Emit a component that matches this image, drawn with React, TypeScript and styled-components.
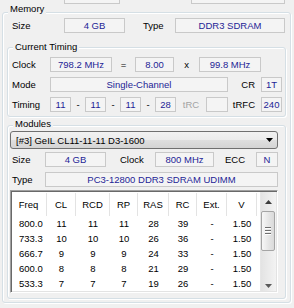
import React from 'react'
import styled, { createGlobalStyle } from 'styled-components'

const GlobalStyle = createGlobalStyle`
  html, body {
    margin: 0;
    padding: 0;
    background: #f0f0f0;
  }
  body {
    font-family: 'Liberation Sans', Arial, sans-serif;
    font-size: 9.5px;
    color: #000;
  }
`

const Page = styled.div`
  width: 294px;
  height: 308px;
  overflow: hidden;
  background: #f0f0f0;
`

// fields of the panel above, scrolled almost out of view
const ClipRow = styled.div`
  display: flex;
  height: 4px;
`

const ClipBox = styled.div<{ $left: number; $w: number }>`
  flex: none;
  margin-left: ${({ $left }) => $left}px;
  width: ${({ $w }) => $w}px;
  box-sizing: border-box;
  border: 1px solid #c9c9c9;
  border-top: none;
  background: #f4f4f4;
`

const Group = styled.div<{ $mt: number; $pad: string }>`
  position: relative;
  box-sizing: border-box;
  margin-top: ${({ $mt }) => $mt}px;
  padding: ${({ $pad }) => $pad};
  border: 1px solid #d5dfe5;
  border-radius: 3px;
  box-shadow: inset 1px 1px 0 #fff, 1px 1px 0 #fff;
`

const OuterGroup = styled(Group)`
  margin-left: 2px;
  margin-right: 3px;
`

const Caption = styled.span<{ $top: number }>`
  position: absolute;
  top: ${({ $top }) => $top}px;
  left: 5px;
  padding: 0 2px;
  line-height: 11px;
  background: #f0f0f0;
  white-space: nowrap;
`

const Stack = styled.div`
  display: flex;
  flex-direction: column;
  gap: 5px;
`

const Row = styled.div<{ $mt?: number; $indent?: number }>`
  display: flex;
  align-items: center;
  height: 15px;
  margin-top: ${({ $mt = 0 }) => $mt}px;
  padding-left: ${({ $indent = 0 }) => $indent}px;
`

const Label = styled.div<{ $w: number; $align?: 'left' | 'center' | 'right'; $pad?: number; $dim?: boolean }>`
  flex: none;
  width: ${({ $w }) => $w}px;
  box-sizing: border-box;
  text-align: ${({ $align = 'left' }) => $align};
  padding: ${({ $align, $pad = 0 }) => ($align === 'right' ? `0 ${$pad}px 0 0` : `0 0 0 ${$pad}px`)};
  color: ${({ $dim }) => ($dim ? '#a3a3a3' : '#000')};
  white-space: nowrap;
`

const Value = styled.div<{ $w?: number }>`
  flex: ${({ $w }) => ($w ? 'none' : '1')};
  width: ${({ $w }) => ($w ? `${$w}px` : 'auto')};
  height: 15px;
  box-sizing: border-box;
  border: 1px solid #c9c9c9;
  background: #f4f4f4;
  color: #1e1e96;
  display: flex;
  align-items: center;
  justify-content: center;
  white-space: nowrap;
`

const Select = styled.div`
  display: flex;
  align-items: center;
  justify-content: space-between;
  height: 18px;
  box-sizing: border-box;
  padding: 0 4px 0 5px;
  border: 1px solid #707070;
  border-radius: 3px;
  background: linear-gradient(#f2f2f2 0%, #ebebeb 50%, #dfdfdf 51%, #d4d4d4 100%);
  white-space: nowrap;
`

const ListView = styled.div`
  display: flex;
  height: 103px;
  margin-top: 3px;
  box-sizing: border-box;
  border: 1px solid;
  border-color: #a0a0a0 #fff #fff #a0a0a0;
  box-shadow: inset 1px 1px 0 #696969, inset -1px -1px 0 #e3e3e3;
  background: #fff;
`

const Table = styled.div`
  flex: 1;
  display: grid;
  grid-template-columns: 36px 29px 34px 28px 31px 28px 30px 30px;
  grid-template-rows: 25px;
  grid-auto-rows: 15px;
  align-content: start;
`

const HeadCell = styled.div`
  margin-top: 2px;
  box-sizing: border-box;
  border-right: 1px solid #e3e3e3;
  display: flex;
  align-items: center;
  justify-content: center;
`

const Cell = styled.div<{ $left?: boolean }>`
  line-height: 15px;
  text-align: ${({ $left }) => ($left ? 'left' : 'center')};
  padding-left: ${({ $left }) => ($left ? 8 : 0)}px;
  white-space: nowrap;
`

const ScrollBar = styled.div`
  flex: none;
  width: 15px;
  margin: 1px 1px 1px 0;
  display: flex;
  flex-direction: column;
  background: linear-gradient(to right, #e3e3e3, #f3f3f3);
  border-left: 1px solid #e6e6e6;
`

const ScrollBtn = styled.div<{ $h: number; $shift: number }>`
  flex: none;
  height: ${({ $h }) => $h}px;
  box-sizing: border-box;
  padding-top: ${({ $shift }) => $shift}px;
  display: flex;
  align-items: center;
  justify-content: center;
`

const Track = styled.div`
  flex: 1;
  padding: 2px 1px 0 0;
`

const Thumb = styled.div`
  height: 40px;
  box-sizing: border-box;
  border: 1px solid #a5a5a5;
  border-radius: 2px;
  background: linear-gradient(to right, #f7f7f7, #e4e4e4 60%, #dadada);
  display: flex;
  flex-direction: column;
  align-items: center;
  justify-content: center;
  gap: 1px;
`

const Grip = styled.div`
  width: 6px;
  height: 1px;
  background: #6e6e6e;
  border-bottom: 1px solid #fff;
`

const Arrow = ({ up, color }: { up?: boolean; color: string }) => (
  <svg width="7" height="4" viewBox="0 0 7 4">
    <polygon points={up ? '3.5,0 7,4 0,4' : '0,0 7,0 3.5,4'} fill={color} />
  </svg>
)

const HEAD = ['Freq', 'CL', 'RCD', 'RP', 'RAS', 'RC', 'Ext.', 'V']

const ROWS = [
  ['800.0', '11', '11', '11', '28', '39', '-', '1.50'],
  ['733.3', '10', '10', '10', '26', '36', '-', '1.50'],
  ['666.7', '9', '9', '9', '24', '33', '-', '1.50'],
  ['600.0', '8', '8', '8', '21', '29', '-', '1.50'],
  ['533.3', '7', '7', '7', '19', '26', '-', '1.50'],
]

export default function App() {
  return (
    <Page>
      <GlobalStyle />
      <ClipRow>
        <ClipBox $left={64} $w={56} />
        <ClipBox $left={71} $w={94} />
      </ClipRow>

      <OuterGroup $mt={8} $pad="5px 4px 3px 4px">
        <Caption $top={-10}>Memory</Caption>
        <Row $indent={5}>
          <Label $w={52}>Size</Label>
          <Value $w={61}>4 GB</Value>
          <Label $w={18} />
          <Label $w={32}>Type</Label>
          <Value $w={110}>DDR3 SDRAM</Value>
        </Row>

        <Group $mt={14} $pad="9px 3px 4px 4px">
          <Caption $top={-7}>Current Timing</Caption>
          <Stack>
            <Row>
              <Label $w={38}>Clock</Label>
              <Value $w={62}>798.2 MHz</Value>
              <Label $w={23} $align="center">=</Label>
              <Value $w={39}>8.00</Value>
              <Label $w={25} $align="center">x</Label>
              <Value $w={62}>99.8 MHz</Value>
            </Row>
            <Row>
              <Label $w={38}>Mode</Label>
              <Value $w={178}>Single-Channel</Value>
              <Label $w={33} $align="right" $pad={6}>CR</Label>
              <Value $w={21}>1T</Value>
            </Row>
            <Row>
              <Label $w={38}>Timing</Label>
              <Value $w={21}>11</Value>
              <Label $w={14} $align="center">-</Label>
              <Value $w={21}>11</Value>
              <Label $w={14} $align="center">-</Label>
              <Value $w={21}>11</Value>
              <Label $w={14} $align="center">-</Label>
              <Value $w={21}>28</Value>
              <Label $w={30} $align="center" $dim>tRC</Label>
              <Value $w={22} />
              <Label $w={33} $align="right" $pad={6}>tRFC</Label>
              <Value $w={21}>240</Value>
            </Row>
          </Stack>
        </Group>

        <Group $mt={8} $pad="5px 7px 5px 2px">
          <Caption $top={-8}>Modules</Caption>
          <Select>
            <span>[#3] GeIL CL11-11-11 D3-1600</span>
            <Arrow color="#000" />
          </Select>
          <Row $mt={3} $indent={2}>
            <Label $w={33}>Size</Label>
            <Value $w={61}>4 GB</Value>
            <Label $w={49} $pad={14}>Clock</Label>
            <Value $w={59}>800 MHz</Value>
            <Label $w={42} $align="center">ECC</Label>
            <Value $w={22}>N</Value>
          </Row>
          <Row $mt={5} $indent={2}>
            <Label $w={33}>Type</Label>
            <Value>PC3-12800 DDR3 SDRAM UDIMM</Value>
          </Row>
          <ListView>
            <Table>
              {HEAD.map((h) => (
                <HeadCell key={h}>{h}</HeadCell>
              ))}
              {ROWS.map((r, i) =>
                r.map((v, j) => (
                  <Cell key={`${i}-${j}`} $left={j === 0}>
                    {v}
                  </Cell>
                ))
              )}
            </Table>
            <ScrollBar>
              <ScrollBtn $h={17} $shift={2}>
                <Arrow up color="#3c3c3c" />
              </ScrollBtn>
              <Track>
                <Thumb>
                  <Grip />
                  <Grip />
                  <Grip />
                </Thumb>
              </Track>
              <ScrollBtn $h={16} $shift={5}>
                <Arrow color="#5a5a5a" />
              </ScrollBtn>
            </ScrollBar>
          </ListView>
        </Group>
      </OuterGroup>
    </Page>
  )
}
